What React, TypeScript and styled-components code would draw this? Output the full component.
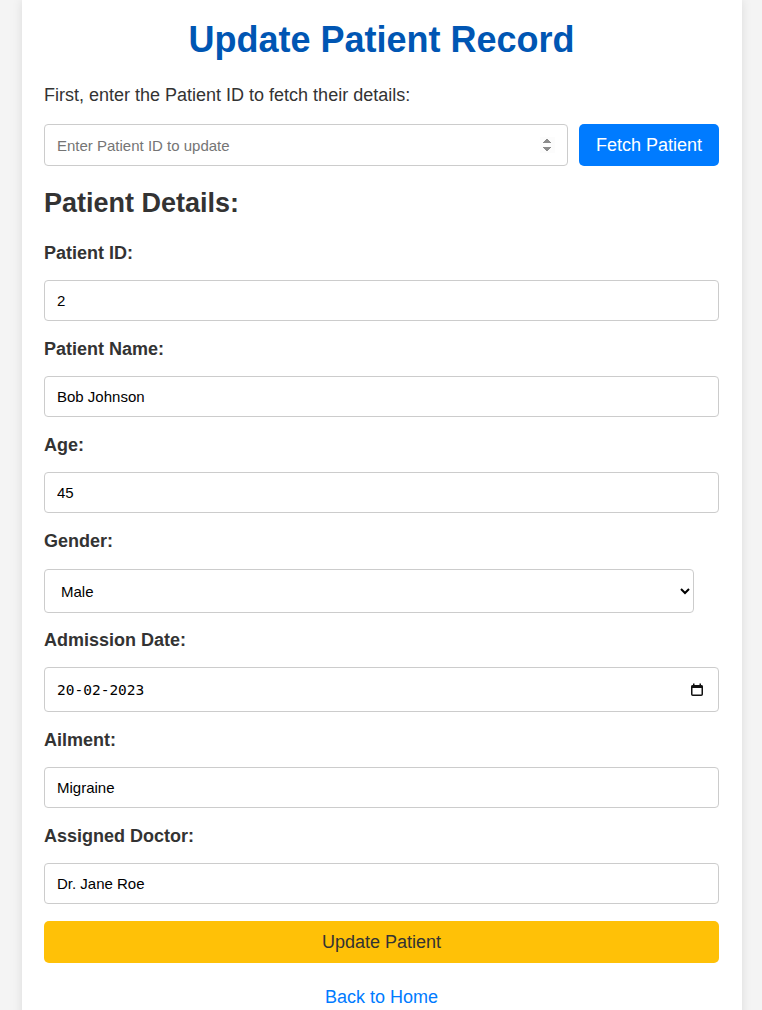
import React from "react";
import styled, { createGlobalStyle } from "styled-components";

const GlobalStyle = createGlobalStyle`
  html, body {
    margin: 0;
    padding: 0;
    background: #f4f4f4;
    font-family: "Liberation Sans", Arial, sans-serif;
    color: #333;
  }
  * { box-sizing: border-box; }
`;

const Card = styled.div`
  width: 720px;
  margin: 0 20px 0 22px;
  background: #fff;
  box-shadow: 0 0 10px rgba(0, 0, 0, 0.1);
  padding: 19px 23px 24px 22px;
  display: flex;
  flex-direction: column;
`;

const Title = styled.h1`
  margin: 0;
  font-size: 36px;
  line-height: 41px;
  font-weight: bold;
  color: #0056b3;
  text-align: center;
`;

const Intro = styled.p`
  margin: 25px 0 0;
  font-size: 18px;
  line-height: 21px;
  color: #333;
`;

const FetchRow = styled.div`
  margin-top: 18px;
  display: flex;
  gap: 11px;
  align-items: stretch;
`;

const BaseInput = styled.input`
  height: 41px;
  width: 100%;
  border: 1px solid #ccc;
  border-radius: 4px;
  padding: 0 12px;
  font-family: "Liberation Sans", Arial, sans-serif;
  font-size: 15px;
  color: #000;
  background: #fff;
  outline: none;
  &::placeholder {
    color: #757575;
  }
`;

const FetchInput = styled(BaseInput)`
  flex: 1;
  height: 42px;
  &::-webkit-inner-spin-button {
    opacity: 1;
  }
`;

const FetchButton = styled.button`
  width: 140px;
  height: 42px;
  border: none;
  border-radius: 5px;
  background: #007bff;
  color: #fff;
  font-family: "Liberation Sans", Arial, sans-serif;
  font-size: 18px;
  cursor: pointer;
  padding: 0;
`;

const SectionTitle = styled.h2`
  margin: 22px 0 0;
  font-size: 27px;
  line-height: 31px;
  font-weight: bold;
  color: #333;
`;

const Fields = styled.div`
  margin-top: 24px;
  display: flex;
  flex-direction: column;
  gap: 18px;
`;

const Field = styled.div`
  display: flex;
  flex-direction: column;
  align-items: flex-start;
  gap: 16px;
`;

const Label = styled.label`
  font-size: 18px;
  line-height: 21px;
  font-weight: bold;
  color: #333;
`;

const GenderSelect = styled.select`
  width: 650px;
  height: 44px;
  margin-top: 1px;
  margin-bottom: -1px;
  border: 1px solid #ccc;
  border-radius: 4px;
  padding: 0 15px 0 12px;
  font-family: "Liberation Sans", Arial, sans-serif;
  font-size: 15px;
  color: #000;
  background: #fff;
  outline: none;
`;

const DateWrap = styled.div`
  position: relative;
  width: 100%;
`;

const DateInput = styled(BaseInput)`
  display: block;
  height: 45px;
  font-family: "DejaVu Sans Mono", monospace;
  font-size: 14.5px;
  padding-right: 40px;
`;

const CalendarIcon = styled.svg`
  position: absolute;
  right: 16px;
  top: 16px;
  width: 12px;
  height: 13px;
  pointer-events: none;
`;

const UpdateButton = styled.button`
  margin-top: 17px;
  width: 100%;
  height: 42px;
  border: none;
  border-radius: 5px;
  background: #ffc107;
  color: #333;
  font-family: "Liberation Sans", Arial, sans-serif;
  font-size: 18px;
  cursor: pointer;
`;

const BackLink = styled.a`
  margin-top: 24px;
  align-self: center;
  font-size: 18px;
  line-height: 21px;
  color: #007bff;
  text-decoration: none;
`;

export default function App() {
  return (
    <>
      <GlobalStyle />
      <Card>
        <Title>Update Patient Record</Title>
        <Intro>First, enter the Patient ID to fetch their details:</Intro>
        <FetchRow>
          <FetchInput type="number" placeholder="Enter Patient ID to update" />
          <FetchButton>Fetch Patient</FetchButton>
        </FetchRow>
        <SectionTitle>Patient Details:</SectionTitle>
        <Fields>
          <Field>
            <Label>Patient ID:</Label>
            <BaseInput type="text" defaultValue="2" readOnly />
          </Field>
          <Field>
            <Label>Patient Name:</Label>
            <BaseInput type="text" defaultValue="Bob Johnson" />
          </Field>
          <Field>
            <Label>Age:</Label>
            <BaseInput type="text" defaultValue="45" />
          </Field>
          <Field>
            <Label>Gender:</Label>
            <GenderSelect defaultValue="Male">
              <option value="Male">Male</option>
              <option value="Female">Female</option>
              <option value="Other">Other</option>
            </GenderSelect>
          </Field>
          <Field>
            <Label>Admission Date:</Label>
            <DateWrap>
              <DateInput type="text" defaultValue="20-02-2023" />
              <CalendarIcon viewBox="0 0 12 13">
                <rect x="0.75" y="2.75" width="10.5" height="9.5" rx="1" fill="none" stroke="#111" strokeWidth="1.5" />
                <rect x="0.5" y="2.5" width="11" height="2.5" fill="#111" />
                <rect x="2" y="0.5" width="1.5" height="2.5" fill="#111" />
                <rect x="8.5" y="0.5" width="1.5" height="2.5" fill="#111" />
              </CalendarIcon>
            </DateWrap>
          </Field>
          <Field>
            <Label>Ailment:</Label>
            <BaseInput type="text" defaultValue="Migraine" />
          </Field>
          <Field>
            <Label>Assigned Doctor:</Label>
            <BaseInput type="text" defaultValue="Dr. Jane Roe" />
          </Field>
        </Fields>
        <UpdateButton>Update Patient</UpdateButton>
        <BackLink href="#">Back to Home</BackLink>
      </Card>
    </>
  );
}
